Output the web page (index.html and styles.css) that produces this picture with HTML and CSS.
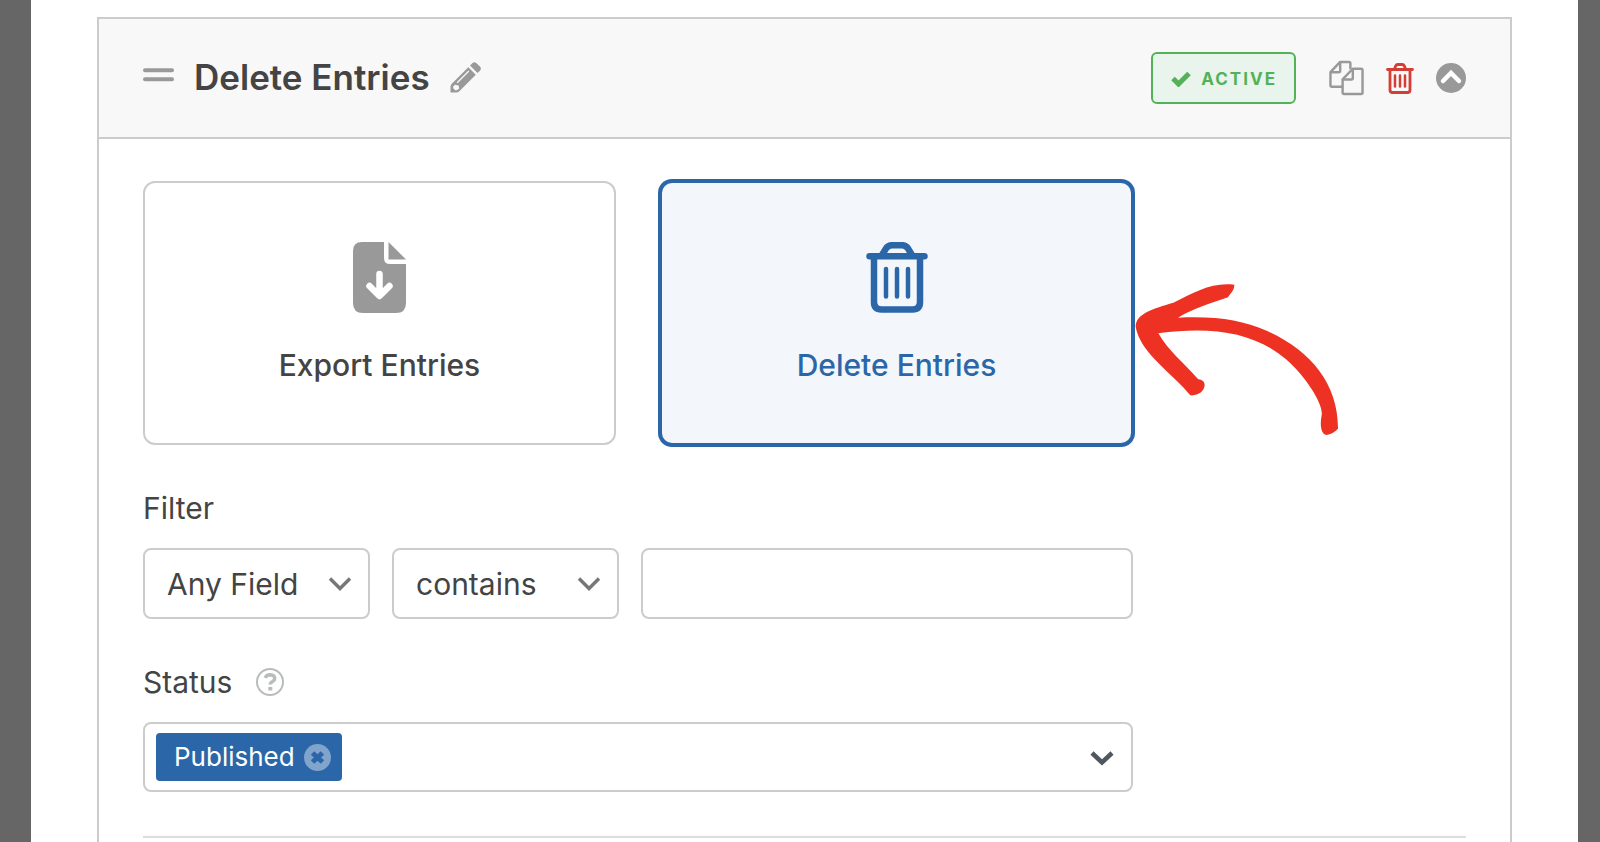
FILE: index.html
```html
<!DOCTYPE html>
<html lang="en">
<head>
  <meta charset="UTF-8">
  <meta name="viewport" content="width=device-width, initial-scale=1.0">
  <title>Delete Entries</title>
  <link rel="stylesheet" href="styles.css">
</head>
<body>
  <main class="modal">
    <section class="task">
      <!-- Task header -->
      <header class="task-header">
        <div class="task-title">
          <button class="icon-button" aria-label="Move task">
            <svg width="31" height="18" viewBox="0 0 31 18"><path d="M2 2.200h27M2 11.200h27" stroke="#999" stroke-width="4" stroke-linecap="round"/></svg>
          </button>
          <h1>Delete Entries</h1>
          <button class="icon-button" aria-label="Rename task">
            <svg width="31" height="31" viewBox="0 0 31 31">
              <path fill="#999" fill-rule="evenodd" d="M18.300 5.200L25.800 12.700L9.300 29.200Q8 30.500 6.200 30.500H0.500V24.800Q0.500 23 1.800 21.700ZM3.200 24.500V26.300L5.100 28.200H6.900L9.300 26.600L8.600 23.500L5 22.700ZM6.700 20.300L7.600 21.200L19.300 9.500L18.400 8.600Z"/>
              <path fill="#999" d="M20 3.500l2.300-2.300q2-2 4.200 0l3.400 3.400q2 2.100 0 4.200L27.500 11z"/>
            </svg>
          </button>
        </div>
        <div class="task-actions">
          <button class="status-badge">
            <svg width="20" height="16" viewBox="0 0 20 16"><path d="M2 7.500l5.500 5.500L18 2.500" fill="none" stroke="#53b158" stroke-width="5"/></svg>
            ACTIVE
          </button>
          <button class="icon-button copy" aria-label="Duplicate task">
            <svg width="35" height="36" viewBox="0 0 36 36" fill="none" stroke="#999" stroke-width="2.500" stroke-linejoin="round">
              <path d="M14 27H3Q1.500 27 1.500 25.500V12L11.500 1.500H20.500Q22 1.500 22 3V9"/>
              <path d="M11.500 1.500V10.500Q11.500 12 10 12H1.500"/>
              <path d="M24.500 8.500H33Q34.500 8.500 34.500 10V33Q34.500 34.500 33 34.500H15.500Q14 34.500 14 33V19.500Z"/>
              <path d="M24.500 8.500V18Q24.500 19.500 23 19.500H14"/>
            </svg>
          </button>
          <button class="icon-button delete" aria-label="Delete task">
            <svg width="28" height="31" viewBox="0 0 28 31" fill="none" stroke="#d33f35" stroke-linecap="round">
              <path stroke-width="2.800" d="M1.500 6.500H26.500M4 6.500V27Q4 29.500 6.500 29.500H21.500Q24 29.500 24 27V6.500M8.500 6L9.700 2.800Q10.300 1.500 11.700 1.500H16.300Q17.700 1.500 18.300 2.800L19.500 6"/>
              <path stroke-width="2.500" d="M9 12.500V23.500M14 12.500V23.500M19 12.500V23.500"/>
            </svg>
          </button>
          <button class="icon-button" aria-label="Collapse task">
            <svg width="30" height="30" viewBox="0 0 30 30"><circle cx="15" cy="15" r="15" fill="#999"/><path d="M7 18l8-8 8 8" fill="none" stroke="#fff" stroke-width="4.500" stroke-linecap="round"/></svg>
          </button>
        </div>
      </header>

      <!-- Task settings -->
      <div class="task-body">
        <div class="types">
          <button class="type">
            <svg width="53" height="71" viewBox="0 0 53 71">
              <path fill="#999" d="M9 0H31V16Q31 22 37 22H53V61Q53 71 43 71H10Q0 71 0 61V9Q0 0 9 0Z"/>
              <path fill="#999" d="M35.500 0L53 17.500H35.500Z"/>
              <path d="M26.500 32V53M16.500 44L26.500 54L36.500 44" fill="none" stroke="#fff" stroke-width="6.500" stroke-linecap="round" stroke-linejoin="round"/>
            </svg>
            Export Entries
          </button>
          <div class="type-wrap">
            <button class="type selected">
              <svg width="62" height="71" viewBox="0 0 62 71" fill="none" stroke="#2b67a8" stroke-linecap="round">
                <path stroke-width="6.500" d="M3.500 14.300H58.500M8 14.300V60Q8 67.500 15.500 67.500H46.500Q54 67.500 54 60V14.300"/>
                <path stroke-width="6.500" stroke-linecap="butt" d="M16 13L20 6.500Q22 3.200 26 3.200H36Q40 3.200 42 6.500L46 13"/>
                <path stroke-width="4.500" d="M20 27V54.500M31 27V54.500M42 27V54.500"/>
              </svg>
              Delete Entries
            </button>
            <svg class="pointer" width="204" height="156" viewBox="45 60 612 468" aria-hidden="true">
              <path fill="#ed3223" d="M47 200C47 160 100 146 160 128C225 96 275 66 343 74C343 92 332 98 324 112C272 130 215 148 174 173C290 168 365 180 440 212C570 270 655 370 654 506C645 516 632 523 619 525C603 522 599 497 605 465C611 435 560 352 498 298C400 214 270 199 115 220C145 272 190 308 234 357C247 360 254 364 254 376C252 394 235 408 211 406C165 346 60 280 47 200Z"/>
            </svg>
          </div>
        </div>

        <label class="field-label" for="filter-field">Filter</label>
        <div class="filters">
          <div class="select">
            <select id="filter-field">
              <option>Any Field</option>
            </select>
            <svg width="24" height="16" viewBox="0 0 24 16"><path d="M2 2.500l10 10 10-10" fill="none" stroke="#777" stroke-width="3.500"/></svg>
          </div>
          <div class="select">
            <select aria-label="Filter condition">
              <option>contains</option>
            </select>
            <svg width="24" height="16" viewBox="0 0 24 16"><path d="M2 2.500l10 10 10-10" fill="none" stroke="#777" stroke-width="3.500"/></svg>
          </div>
          <input type="text" aria-label="Filter value">
        </div>

        <div class="field-label" id="status-label">
          Status
          <button class="icon-button" aria-label="Help">
            <svg width="28" height="28" viewBox="0 0 28 28" fill="none" stroke="#b8bcba">
              <circle cx="14" cy="14" r="13" stroke-width="2"/>
              <path d="M9.300 9.800Q10.500 6.800 14 6.800Q18.700 7 18.700 10.500Q18.700 12.300 16.500 13.500Q14.300 14.600 14.300 16.500" stroke-width="3.500"/>
              <path d="M14.300 19V22.500" stroke-width="4"/>
            </svg>
          </button>
        </div>
        <div class="tags" role="group" aria-labelledby="status-label">
          <span class="tag">
            Published
            <button class="icon-button" aria-label="Remove Published">
              <svg width="27" height="27" viewBox="0 0 27 27"><circle cx="13.500" cy="13.500" r="13.500" fill="#80a4cb"/><path d="M8.500 9l10 9M18.500 9l-10 9" stroke="#2b67a8" stroke-width="5"/></svg>
            </button>
          </span>
          <button class="icon-button" aria-label="Show statuses">
            <svg width="26" height="17" viewBox="0 0 26 17"><path d="M3 4l10 9.500L23 4" fill="none" stroke="#50575e" stroke-width="4.500"/></svg>
          </button>
        </div>
        <hr>
      </div>
    </section>
  </main>
</body>
</html>
```
FILE: styles.css
```css
* {
  box-sizing: border-box;
}

body {
  margin: 0;
  background-color: #666;
  color: #444;
  font-family: Inter, "Liberation Sans", sans-serif;
  font-size: 30px;
  line-height: 38px;
}

button, select, input {
  font: inherit;
  color: inherit;
}

button {
  cursor: pointer;
}

svg {
  display: block;
  flex: none;
}

.modal {
  display: flex;
  height: 100vh;
  margin: 0 22px 0 31px;
  padding: 17px 66px 0;
  overflow: hidden;
  background-color: #fff;
}

.task {
  flex: 1;
  border: 2px solid #ccc;
  border-bottom: 0;
}

.task-header {
  display: flex;
  align-items: center;
  justify-content: space-between;
  height: 120px;
  padding: 0 44px;
  border-bottom: 2px solid #ccc;
  background-color: #f8f8f8;
}

.task-title {
  display: flex;
  align-items: center;
  gap: 20px;
  padding-bottom: 2px;
}

h1 {
  margin: 0;
  font-size: 35px;
  font-weight: 600;
}

.icon-button {
  padding: 0;
  border: 0;
  background: none;
}

.task-actions {
  display: flex;
  align-items: center;
}

.status-badge {
  display: flex;
  align-items: center;
  gap: 10px;
  height: 52px;
  margin-right: 33px;
  padding: 2px 17px 0 18px;
  border: 2px solid #53b158;
  border-radius: 6px;
  background-color: #e9f4ec;
  color: #53b158;
  font-size: 17px;
  font-weight: 700;
  letter-spacing: 2px;
}

.copy {
  margin-right: 22px;
}

.delete {
  margin-right: 22px;
}

.task-body {
  padding: 42px 44px;
}

.types, .filters, .tags {
  max-width: 990px;
}

/* Task type cards */
.types {
  display: grid;
  grid-template-columns: 1fr 1fr;
  gap: 44px;
}

.type-wrap {
  position: relative;
}

.type {
  display: flex;
  flex-direction: column;
  align-items: center;
  gap: 33px;
  width: 100%;
  padding: 59px 20px;
  border: 2px solid #ccc;
  border-radius: 12px;
  background-color: #fff;
  font-weight: 500;
}

.type.selected {
  border-color: #2b67a8;
  background-color: #f3f6fa;
  box-shadow: 0 0 0 2px #2b67a8;
  color: #2b67a8;
}

.pointer {
  position: absolute;
  top: 99px;
  left: calc(100% + 2px);
}

/* Fields */
.field-label {
  display: flex;
  align-items: center;
  gap: 24px;
  margin: 44px 0 21px;
}

.filters {
  display: flex;
  gap: 22px;
}

.select {
  position: relative;
  width: 227px;
}

.select select {
  appearance: none;
  width: 100%;
  padding: 0 50px 0 22px;
}

.select svg {
  position: absolute;
  top: 28px;
  right: 18px;
  pointer-events: none;
}

.select select, .filters input, .tags {
  height: 71px;
  border: 2px solid #ccc;
  border-radius: 8px;
  background-color: #fff;
}

.filters input {
  flex: 1;
  min-width: 0;
  padding: 0 22px;
}

.tags {
  display: flex;
  align-items: center;
  justify-content: space-between;
  height: 70px;
  padding: 0 16px 0 11px;
}

.tag {
  display: flex;
  align-items: center;
  gap: 9px;
  height: 48px;
  padding: 0 11px 0 18px;
  border-radius: 4px;
  background-color: #2b67a8;
  color: #fff;
  font-size: 26px;
}

hr {
  margin: 44px 0 0;
  border: 0;
  border-top: 2px solid #ddd;
}
```
